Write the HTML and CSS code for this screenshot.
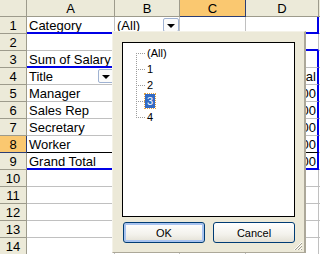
FILE: index.html
```html
<!DOCTYPE html>
<html lang="en">
<head>
  <meta charset="UTF-8" />
  <title>PivotTable page field</title>
  <link rel="stylesheet" href="styles.css">
</head>
<body>
  <div class="sheet">
    <div class="hd corner"></div>
    <div class="hd col">A</div>
    <div class="hd col">B</div>
    <div class="hd col sel">C</div>
    <div class="hd col">D</div>
    <div class="hd col"></div>

    <div class="hd row">1</div>
    <div class="cell page">Category</div>
    <div class="cell page drop"><span>(All)</span><span class="dd"></span></div>
    <div class="cell page"></div>
    <div class="cell page edge"></div>
    <div class="cell"></div>

    <div class="hd row">2</div>
    <div class="cell"></div>
    <div class="cell"></div>
    <div class="cell"></div>
    <div class="cell top"></div>
    <div class="cell"></div>

    <div class="hd row">3</div>
    <div class="cell blue-b">Sum of Salary</div>
    <div class="cell"></div>
    <div class="cell"></div>
    <div class="cell edge"></div>
    <div class="cell"></div>

    <div class="hd row">4</div>
    <div class="cell drop"><span>Title</span><span class="dd"></span></div>
    <div class="cell"></div>
    <div class="cell"></div>
    <div class="cell edge num">Total</div>
    <div class="cell"></div>

    <div class="hd row">5</div>
    <div class="cell">Manager</div>
    <div class="cell"></div>
    <div class="cell"></div>
    <div class="cell edge num">$9,000</div>
    <div class="cell"></div>

    <div class="hd row">6</div>
    <div class="cell">Sales Rep</div>
    <div class="cell"></div>
    <div class="cell"></div>
    <div class="cell edge num">$6,200</div>
    <div class="cell"></div>

    <div class="hd row">7</div>
    <div class="cell">Secretary</div>
    <div class="cell"></div>
    <div class="cell"></div>
    <div class="cell edge num">$3,100</div>
    <div class="cell"></div>

    <div class="hd row sel">8</div>
    <div class="cell dark-b">Worker</div>
    <div class="cell dark-b"></div>
    <div class="cell dark-b"></div>
    <div class="cell dark-b edge num">$2,400</div>
    <div class="cell"></div>

    <div class="hd row">9</div>
    <div class="cell blue-b">Grand Total</div>
    <div class="cell blue-b"></div>
    <div class="cell blue-b"></div>
    <div class="cell blue-b edge num">$20,700</div>
    <div class="cell"></div>

    <div class="hd row">10</div>
    <div class="cell"></div><div class="cell"></div><div class="cell"></div><div class="cell"></div><div class="cell"></div>
    <div class="hd row">11</div>
    <div class="cell"></div><div class="cell"></div><div class="cell"></div><div class="cell"></div><div class="cell"></div>
    <div class="hd row">12</div>
    <div class="cell"></div><div class="cell"></div><div class="cell"></div><div class="cell"></div><div class="cell"></div>
    <div class="hd row">13</div>
    <div class="cell"></div><div class="cell"></div><div class="cell"></div><div class="cell"></div><div class="cell"></div>
    <div class="hd row">14</div>
    <div class="cell"></div><div class="cell"></div><div class="cell"></div><div class="cell"></div><div class="cell"></div>
  </div>

  <div class="popup">
    <div class="list">
      <ul class="tree">
        <li><span>(All)</span></li>
        <li><span>1</span></li>
        <li><span>2</span></li>
        <li><span class="picked">3</span></li>
        <li><span>4</span></li>
      </ul>
    </div>
    <div class="buttons">
      <button class="btn focus">OK</button>
      <button class="btn">Cancel</button>
    </div>
    <svg class="grip" width="10" height="10" viewBox="0 0 10 10">
      <path d="M9 1 L1 9 M9 4 L4 9 M9 7 L7 9" stroke="#fff" stroke-width="1"/>
      <path d="M9 2 L2 9 M9 5 L5 9 M9 8 L8 9" stroke="#a19e90" stroke-width="1"/>
    </svg>
  </div>
</body>
</html>
```

FILE: styles.css
```css
* { box-sizing: border-box; }

body {
  margin: 0;
  width: 320px;
  height: 254px;
  overflow: hidden;
  position: relative;
  background: #fff;
  font-family: 'Liberation Sans', Arial, sans-serif;
}

.sheet {
  display: grid;
  grid-template-columns: 27px 88px 65px 66px 73px 1fr;
  grid-auto-rows: 17px;
  font-size: 13px;
  color: #000;
}

.hd {
  background: #ecead9;
  border-right: 1px solid #9d9b8c;
  border-bottom: 1px solid #9d9b8c;
  display: flex;
  align-items: center;
  justify-content: center;
  line-height: 1;
  padding-top: 1px;
}

.hd.sel {
  background: #fac870;
  border-color: #2b3d74;
}

.cell {
  border-right: 1px solid #c0c0c0;
  border-bottom: 1px solid #c0c0c0;
  padding: 1px 2px 0;
  line-height: 15px;
  white-space: nowrap;
  overflow: hidden;
}

.cell.num {
  text-align: right;
  padding-right: 1px;
}

.page,
.blue-b {
  border-bottom: 2px solid #0000e6;
}

.edge {
  border-right: 2px solid #0000e6;
}

.top {
  border-bottom: 2px solid #0000e6;
}

.dark-b {
  border-bottom-color: #000;
}

.drop {
  display: flex;
  justify-content: space-between;
  align-items: flex-start;
  padding-right: 0;
  overflow: visible;
}

.dd {
  width: 16px;
  height: 14px;
  border: 1px solid #9fb2d2;
  border-radius: 2px;
  background: #fbfbfa;
  display: flex;
  align-items: center;
  justify-content: center;
}

.dd::after {
  content: '';
  border-left: 4px solid transparent;
  border-right: 4px solid transparent;
  border-top: 4px solid #000;
  margin-top: 1px;
}

.popup {
  position: absolute;
  left: 112px;
  top: 31px;
  width: 194px;
  height: 222px;
  background: #ece9d8;
  border-top: 1px solid #f4f2e8;
  border-left: 1px solid #f4f2e8;
  border-right: 2px solid #aca899;
  border-bottom: 1px solid #aca899;
  padding: 10px 9px 0 9px;
  font-size: 11px;
}

.list {
  height: 175px;
  background: #fff;
  border: 1px solid #000;
  padding-top: 2px;
}

.tree {
  list-style: none;
  margin: 0 0 0 13px;
  padding: 0;
  position: relative;
}

.tree::before {
  content: '';
  position: absolute;
  left: 0;
  top: 8px;
  bottom: 7px;
  border-left: 1px dotted #9c9c9c;
}

.tree li {
  height: 16px;
  display: flex;
  align-items: center;
}

.tree li::before {
  content: '';
  width: 9px;
  border-top: 1px dotted #9c9c9c;
}

.tree span {
  padding: 1px 2px;
  line-height: 12px;
}

.tree .picked {
  background: #316ac5;
  color: #fff;
  outline: 1px dotted #e0a040;
}

.buttons {
  display: flex;
  gap: 8px;
  margin-top: 5px;
  padding-left: 1px;
}

.btn {
  width: 82px;
  height: 21px;
  font: 11px 'Liberation Sans', Arial, sans-serif;
  color: #000;
  border: 1px solid #003c74;
  border-radius: 3px;
  background: linear-gradient(#ffffff, #f3f2ec 60%, #e3e0d5);
}

.btn.focus {
  box-shadow: inset 0 0 0 2px #a8c3ef;
}

.grip {
  position: absolute;
  right: 1px;
  bottom: 1px;
}
```
